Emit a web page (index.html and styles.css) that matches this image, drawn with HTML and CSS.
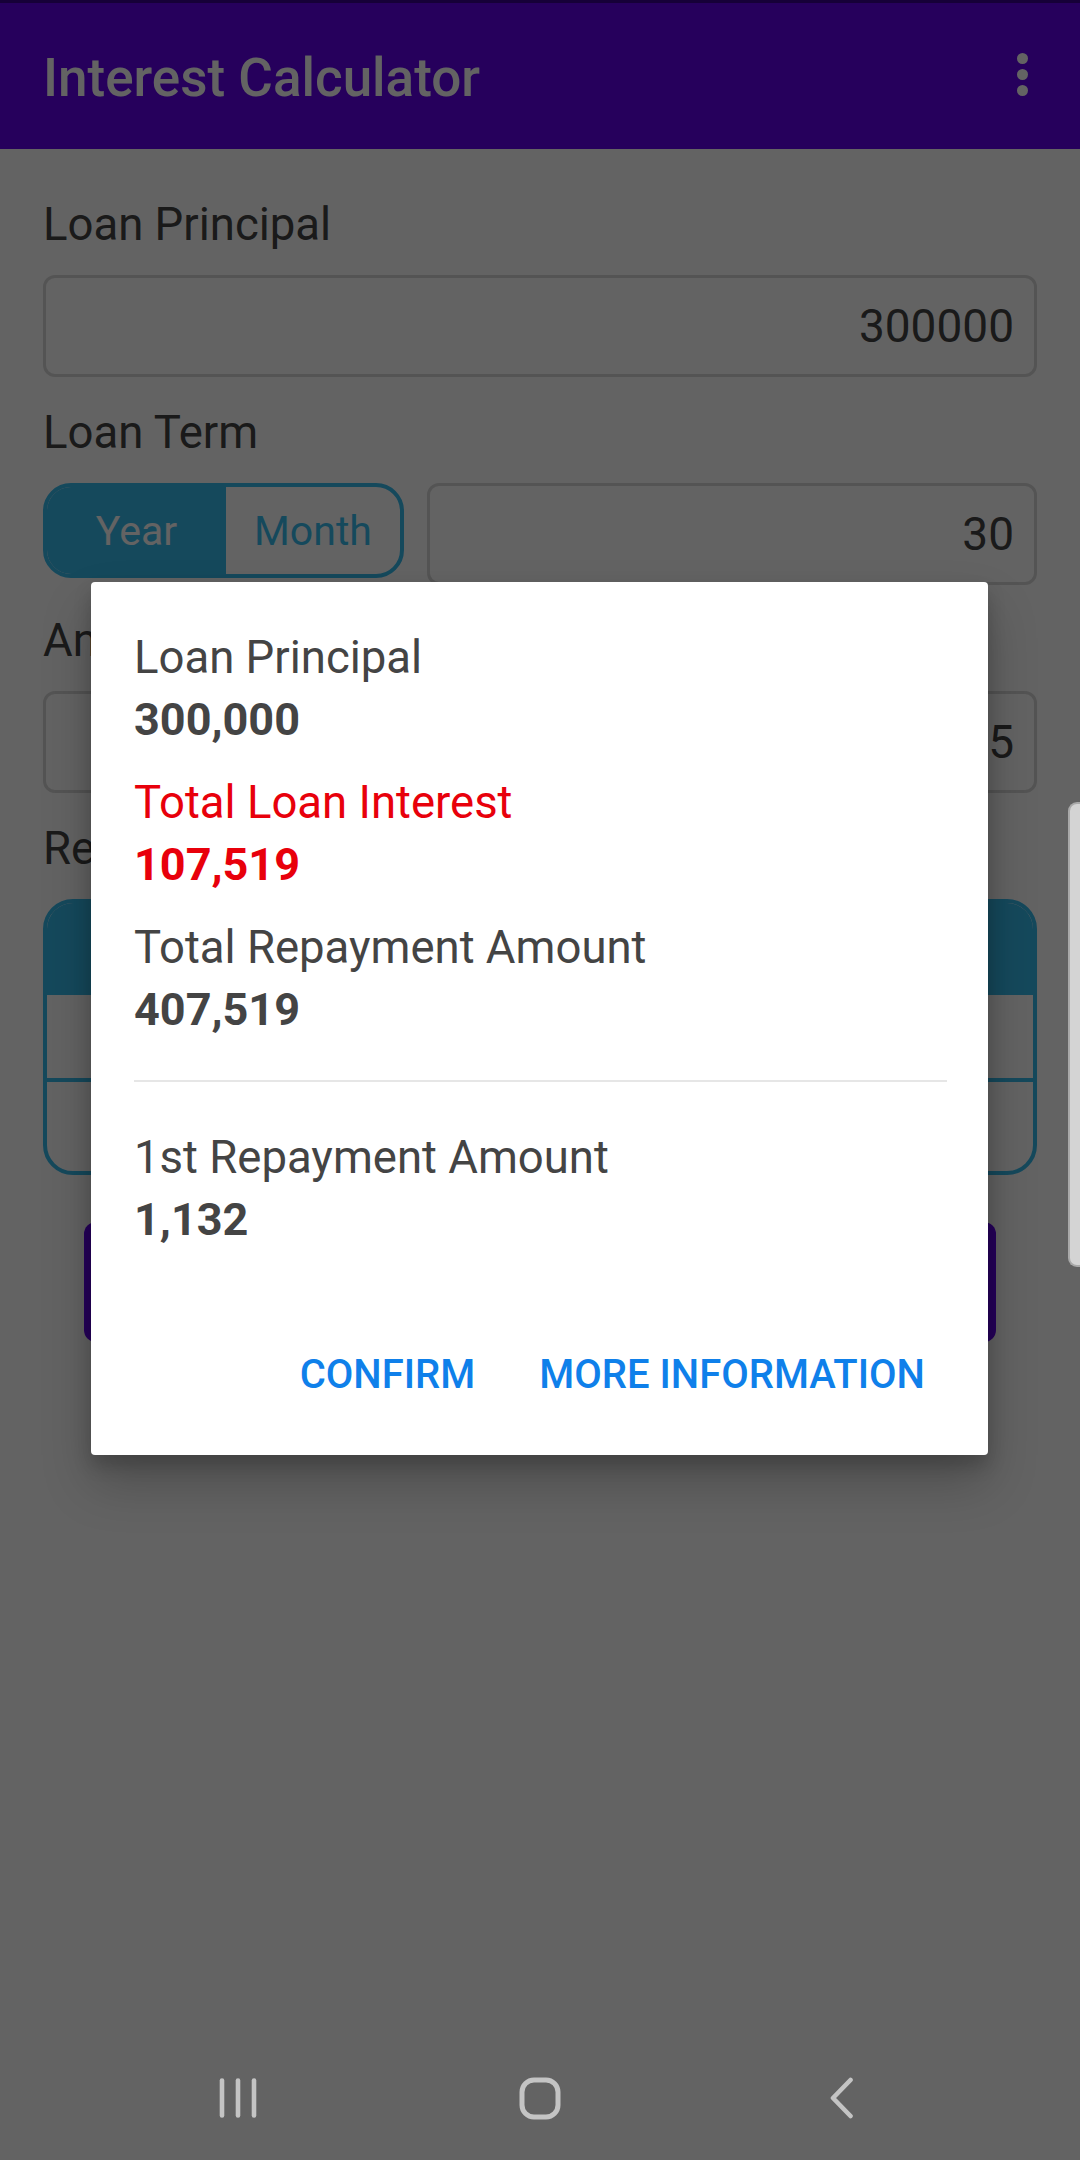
FILE: index.html
```html
<!DOCTYPE html>
<html lang="en">
<head>
<meta charset="utf-8">
<title>Interest Calculator</title>
<link rel="stylesheet" href="styles.css">
</head>
<body>
<div class="screen">
  <header class="appbar">
    <h1 class="title">Interest Calculator</h1>
    <div class="menu"><span class="dot"></span><span class="dot"></span><span class="dot"></span></div>
  </header>

  <main class="form">
    <section class="field">
      <div class="label">Loan Principal</div>
      <div class="input">300000</div>
    </section>
    <section class="field">
      <div class="label">Loan Term</div>
      <div class="term-row">
        <div class="seg">
          <span class="seg-item active">Year</span>
          <span class="seg-item">Month</span>
        </div>
        <div class="input term-input">30</div>
      </div>
    </section>
    <section class="field">
      <div class="label">Annual Interest Rate (%)</div>
      <div class="input">2.15</div>
    </section>
    <section class="field">
      <div class="label">Repayment Method</div>
      <div class="card">
        <div class="card-head"></div>
        <div class="card-row"></div>
        <div class="card-row last"></div>
      </div>
    </section>
    <button class="calc" aria-label="Calculate"></button>
  </main>

  <div class="scrim"></div>
  <div class="edge-handle"></div>

  <div class="dialog">
    <div class="group">
      <div class="d-label">Loan Principal</div>
      <div class="d-value">300,000</div>
    </div>
    <div class="group red">
      <div class="d-label">Total Loan Interest</div>
      <div class="d-value">107,519</div>
    </div>
    <div class="group">
      <div class="d-label">Total Repayment Amount</div>
      <div class="d-value">407,519</div>
    </div>
    <div class="divider"></div>
    <div class="group first-pay">
      <div class="d-label">1st Repayment Amount</div>
      <div class="d-value">1,132</div>
    </div>
    <div class="actions">
      <span class="btn">CONFIRM</span>
      <span class="btn">MORE INFORMATION</span>
    </div>
  </div>

  <nav class="navbar">
    <div class="nav-slot">
      <svg width="40" height="42" viewBox="0 0 40 42"><g stroke="#c4c4c4" stroke-width="4.6" stroke-linecap="round"><line x1="4" y1="3.5" x2="4" y2="38.5"/><line x1="20" y1="3.5" x2="20" y2="38.5"/><line x1="36" y1="3.5" x2="36" y2="38.5"/></g></svg>
    </div>
    <div class="nav-slot">
      <svg width="42" height="43" viewBox="0 0 42 43"><rect x="3" y="3" width="36" height="37" rx="12" fill="none" stroke="#c4c4c4" stroke-width="5"/></svg>
    </div>
    <div class="nav-slot">
      <svg width="24" height="42" viewBox="0 0 24 42"><polyline points="20.5,3 3,21 20.5,39" fill="none" stroke="#c4c4c4" stroke-width="4.6" stroke-linecap="round" stroke-linejoin="round"/></svg>
    </div>
  </nav>
</div>
</body>
</html>
```

FILE: styles.css
```css
* { box-sizing: border-box; }

html, body {
  margin: 0;
  padding: 0;
}

body {
  font-family: Roboto, "Noto Sans", "Liberation Sans", sans-serif;
  background: #ffffff;
}

.screen {
  position: relative;
  width: 1080px;
  height: 2160px;
  overflow: hidden;
  background: #ffffff;
}

/* App bar */
.appbar {
  height: 149px;
  background: #6200ee;
  border-top: 3px solid #3a0090;
  padding: 3px 0 0 43px;
  display: flex;
  align-items: center;
  justify-content: space-between;
}

.title {
  margin: 0;
  font-size: 53px;
  font-weight: 500;
  color: #ffffff;
  letter-spacing: 0;
}

.menu {
  width: 116px;
  display: flex;
  flex-direction: column;
  align-items: center;
  gap: 5px;
  margin-top: -6px;
}

.dot {
  width: 11px;
  height: 11px;
  border-radius: 50%;
  background: #ffffff;
}

/* Form */
.form {
  padding: 50px 43px 0 43px;
  display: flex;
  flex-direction: column;
}

.field {
  margin-bottom: 30px;
}

.field:last-of-type {
  margin-bottom: 0;
}

.label {
  font-size: 45.5px;
  line-height: 52px;
  color: #444444;
  margin-bottom: 24px;
  white-space: nowrap;
}

.input {
  height: 102px;
  border: 3px solid #d9d9d9;
  border-radius: 12px;
  padding-right: 20px;
  display: flex;
  align-items: center;
  justify-content: flex-end;
  font-size: 46px;
  color: #444444;
}

.term-row {
  display: flex;
  align-items: flex-start;
  gap: 23px;
}

.seg {
  width: 361px;
  height: 95px;
  border: 4px solid #38bbee;
  border-radius: 28px;
  overflow: hidden;
  display: flex;
  flex-shrink: 0;
}

.seg-item {
  flex: 0 0 auto;
  display: flex;
  align-items: center;
  justify-content: center;
  font-size: 41px;
  color: #38bbee;
}

.seg-item.active {
  width: 179px;
  background: #38bbee;
  color: #ffffff;
}

.seg-item:not(.active) {
  flex: 1 1 auto;
}

.term-input {
  flex: 1 1 auto;
}

.card {
  height: 276px;
  border: 4px solid #38bbee;
  border-radius: 30px;
  overflow: hidden;
  display: flex;
  flex-direction: column;
}

.card-head {
  height: 92px;
  background: #38bbee;
}

.card-row {
  height: 87px;
  border-bottom: 4px solid #38bbee;
}

.card-row.last {
  flex: 1 1 auto;
  border-bottom: none;
}

.calc {
  margin: 47px 41px 0 41px;
  height: 120px;
  border: none;
  border-radius: 12px;
  background: #6200ee;
}

/* Overlay */
.scrim {
  position: absolute;
  inset: 0;
  background: rgba(0, 0, 0, 0.61);
}

.edge-handle {
  position: absolute;
  right: 0;
  top: 802px;
  width: 12px;
  height: 465px;
  background: #d4d4d4;
  border: 2px solid #a9a9a9;
  border-right: none;
  border-radius: 9px 0 0 9px;
}

/* Dialog */
.dialog {
  position: absolute;
  left: 91px;
  top: 582px;
  width: 897px;
  height: 873px;
  background: #ffffff;
  border-radius: 4px;
  padding: 45px 41px 0 43px;
  box-shadow: 0 28px 50px rgba(0, 0, 0, 0.22), 0 10px 18px rgba(0, 0, 0, 0.18);
  display: flex;
  flex-direction: column;
}

.group {
  margin-bottom: 22px;
}

.d-label {
  font-size: 45.5px;
  line-height: 61.5px;
  color: #444444;
  white-space: nowrap;
}

.d-value {
  font-size: 45px;
  line-height: 61.5px;
  font-weight: 700;
  color: #444444;
}

.group.red .d-label,
.group.red .d-value {
  color: #e8000b;
}

.divider {
  height: 2px;
  background: #e6e6e6;
  margin-top: 18px;
}

.group.first-pay {
  margin-top: 45px;
  margin-bottom: 0;
}

.actions {
  margin-top: 75px;
  height: 99px;
  display: flex;
  justify-content: flex-end;
  align-items: center;
  gap: 64px;
  padding-right: 22px;
}

.btn {
  font-size: 40px;
  font-weight: 500;
  color: #0f80ea;
  letter-spacing: 0;
}

/* System navigation bar */
.navbar {
  position: absolute;
  left: 0;
  right: 0;
  bottom: 0;
  height: 124px;
  display: flex;
  justify-content: center;
  align-items: center;
}

.nav-slot {
  width: 302px;
  display: flex;
  justify-content: center;
  align-items: center;
}

.nav-slot svg {
  display: block;
}
```
